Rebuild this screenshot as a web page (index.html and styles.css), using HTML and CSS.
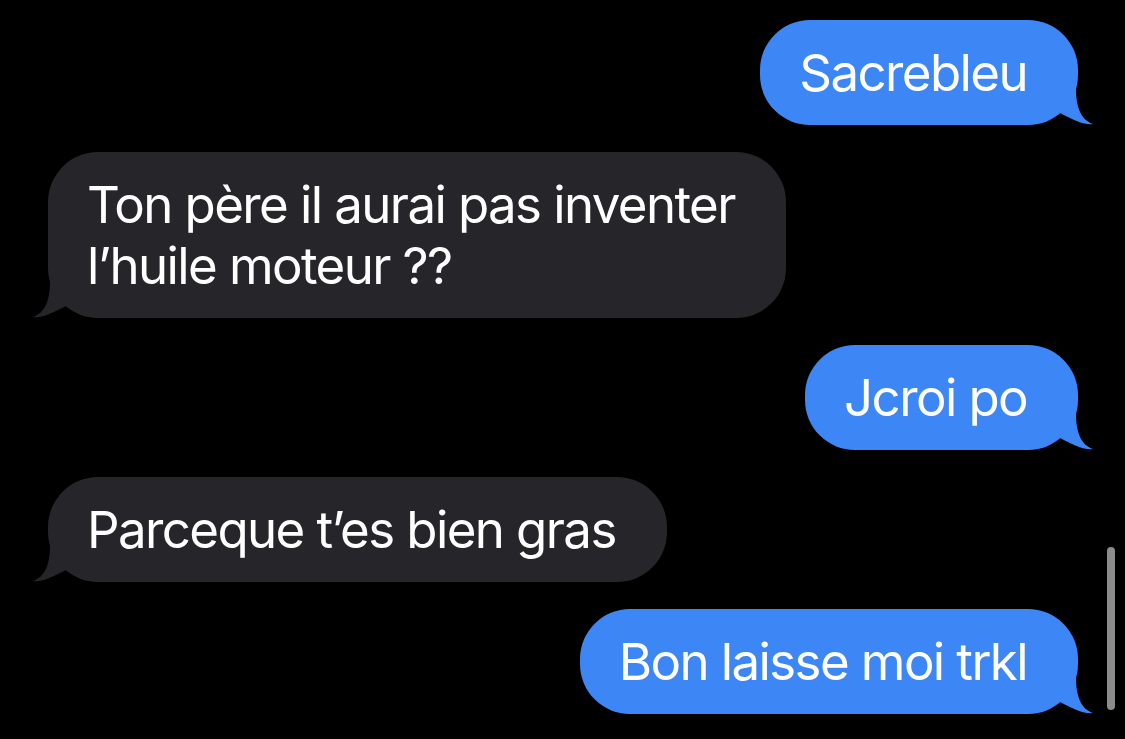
FILE: index.html
```html
<!doctype html>
<html lang="fr">
<head>
    <meta charset="UTF-8">
    <meta name="viewport" content="width=device-width, initial-scale=1.0">
    <title>Messages</title>
    <link rel="stylesheet" href="styles.css">
</head>
<body>
<div class="thread">
    <div class="bubble sent">Sacrebleu
        <svg class="tail" viewBox="0 0 40 36" width="40" height="36"><path d="M22,0 C22,18 27,31 39,35 C31,36 23,33 6,24 L6,0 Z"/></svg>
    </div>
    <div class="bubble received">Ton père il aurai pas inventer<br>l’huile moteur ??
        <svg class="tail" viewBox="0 0 40 36" width="40" height="36"><path d="M22,0 C22,18 27,31 39,35 C31,36 23,33 6,24 L6,0 Z"/></svg>
    </div>
    <div class="bubble sent">Jcroi po
        <svg class="tail" viewBox="0 0 40 36" width="40" height="36"><path d="M22,0 C22,18 27,31 39,35 C31,36 23,33 6,24 L6,0 Z"/></svg>
    </div>
    <div class="bubble received">Parceque t’es bien gras
        <svg class="tail" viewBox="0 0 40 36" width="40" height="36"><path d="M22,0 C22,18 27,31 39,35 C31,36 23,33 6,24 L6,0 Z"/></svg>
    </div>
    <div class="bubble sent">Bon laisse moi trkl
        <svg class="tail" viewBox="0 0 40 36" width="40" height="36"><path d="M22,0 C22,18 27,31 39,35 C31,36 23,33 6,24 L6,0 Z"/></svg>
    </div>
</div>
<div class="scroll-indicator"></div>
</body>
</html>
```

FILE: styles.css
```css
body {
    margin: 0;
    background-color: #000000;
    font-family: 'Inter', 'Noto Sans', sans-serif;
    color: #ffffff;
    height: 739px;
    overflow: hidden;
    position: relative;
}

.thread {
    display: flex;
    flex-direction: column;
    gap: 27px;
    padding: 20px 47px 0 48px;
}

.bubble {
    position: relative;
    font-size: 51px;
    line-height: 61px;
    letter-spacing: -1.6px;
    padding: 22px 51px 22px 39px;
    border-radius: 50px;
    white-space: nowrap;
}

.sent {
    align-self: flex-end;
    background-color: #3d86f6;
}

.received {
    align-self: flex-start;
    background-color: #26262a;
}

/* little curl at the bottom corner */
.tail {
    position: absolute;
    bottom: 0;
}

.sent .tail {
    right: -16px;
    fill: #3d86f6;
}

.received .tail {
    left: -16px;
    fill: #26262a;
    transform: scaleX(-1);
}

.scroll-indicator {
    position: absolute;
    left: 1107px;
    top: 547px;
    width: 8px;
    height: 163px;
    border-radius: 4px;
    background-color: #8c8c8c;
}
```
